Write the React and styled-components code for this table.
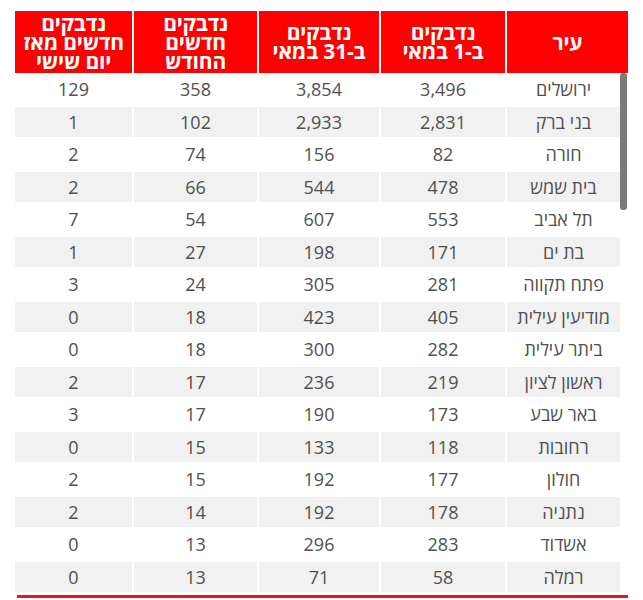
import React from "react";
import styled, { createGlobalStyle } from "styled-components";

const rows = [
  ["ירושלים", "3,496", "3,854", "358", "129"],
  ["בני ברק", "2,831", "2,933", "102", "1"],
  ["חורה", "82", "156", "74", "2"],
  ["בית שמש", "478", "544", "66", "2"],
  ["תל אביב", "553", "607", "54", "7"],
  ["בת ים", "171", "198", "27", "1"],
  ["פתח תקווה", "281", "305", "24", "3"],
  ["מודיעין עילית", "405", "423", "18", "0"],
  ["ביתר עילית", "282", "300", "18", "0"],
  ["ראשון לציון", "219", "236", "17", "2"],
  ["באר שבע", "173", "190", "17", "3"],
  ["רחובות", "118", "133", "15", "0"],
  ["חולון", "177", "192", "15", "2"],
  ["נתניה", "178", "192", "14", "2"],
  ["אשדוד", "283", "296", "13", "0"],
  ["רמלה", "58", "71", "13", "0"],
];

const headers = [
  ["עיר"],
  ["נדבקים", "ב-1 במאי"],
  ["נדבקים", "ב-31 במאי"],
  ["נדבקים", "חדשים", "החודש"],
  ["נדבקים", "חדשים מאז", "יום שישי"],
];

const GlobalStyle = createGlobalStyle`
  body {
    margin: 0;
    background: #ffffff;
    font-family: "Open Sans", "Noto Sans", "DejaVu Sans", sans-serif;
  }
`;

const Page = styled.div`
  padding: 11px 15px 0 15px;
  height: 600px;
  box-sizing: border-box;
  overflow: hidden;
  direction: rtl;
`;

const HeaderRow = styled.div`
  display: grid;
  grid-template-columns: 121px 124px 120px 123px 1fr;
  gap: 0 2px;
  background: #ffffff;
`;

const HeaderCell = styled.div`
  background: #ff0000;
  color: #ffffff;
  height: 62px;
  display: flex;
  flex-direction: column;
  justify-content: center;
  align-items: center;
  font-weight: 700;
  font-size: 21px;
  line-height: 19px;
  letter-spacing: -0.2px;
`;

const BodyWrap = styled.div`
  display: flex;
  flex-direction: row;
`;

const ScrollTrack = styled.div`
  width: 8px;
  flex: none;
  display: flex;
  flex-direction: column;
  align-items: flex-end;
`;

const ScrollThumb = styled.div`
  width: 7px;
  height: 137px;
  background: #7a7a7a;
  border-radius: 3px;
`;

const Body = styled.div`
  flex: 1;
`;

const Row = styled.div`
  display: grid;
  grid-template-columns: 113px 124px 120px 123px 1fr;
  gap: 0 2px;
  height: 32.5px;
  padding: 1px 0;
  box-sizing: border-box;
  background: #ffffff;
`;

const Cell = styled.div`
  background: ${(p) => (p.$striped ? "#f1f1f1" : "#ffffff")};
  display: flex;
  align-items: center;
  justify-content: center;
  font-size: 18px;
  color: #505050;
  font-weight: 400;
`;

const BottomLine = styled.div`
  margin-top: 2px;
  margin-left: 2px;
  height: 3px;
  background: #e5141e;
`;

export default function App() {
  return (
    <>
      <GlobalStyle />
      <Page>
        <HeaderRow>
          {headers.map((lines, i) => (
            <HeaderCell key={i}>
              {lines.map((l, j) => (
                <span key={j}>{l}</span>
              ))}
            </HeaderCell>
          ))}
        </HeaderRow>
        <BodyWrap>
          <ScrollTrack>
            <ScrollThumb />
          </ScrollTrack>
          <Body>
            {rows.map((r, i) => (
              <Row key={i}>
                {r.map((c, j) => (
                  <Cell key={j} $striped={i % 2 === 1}>
                    {c}
                  </Cell>
                ))}
              </Row>
            ))}
          </Body>
        </BodyWrap>
        <BottomLine />
      </Page>
    </>
  );
}
